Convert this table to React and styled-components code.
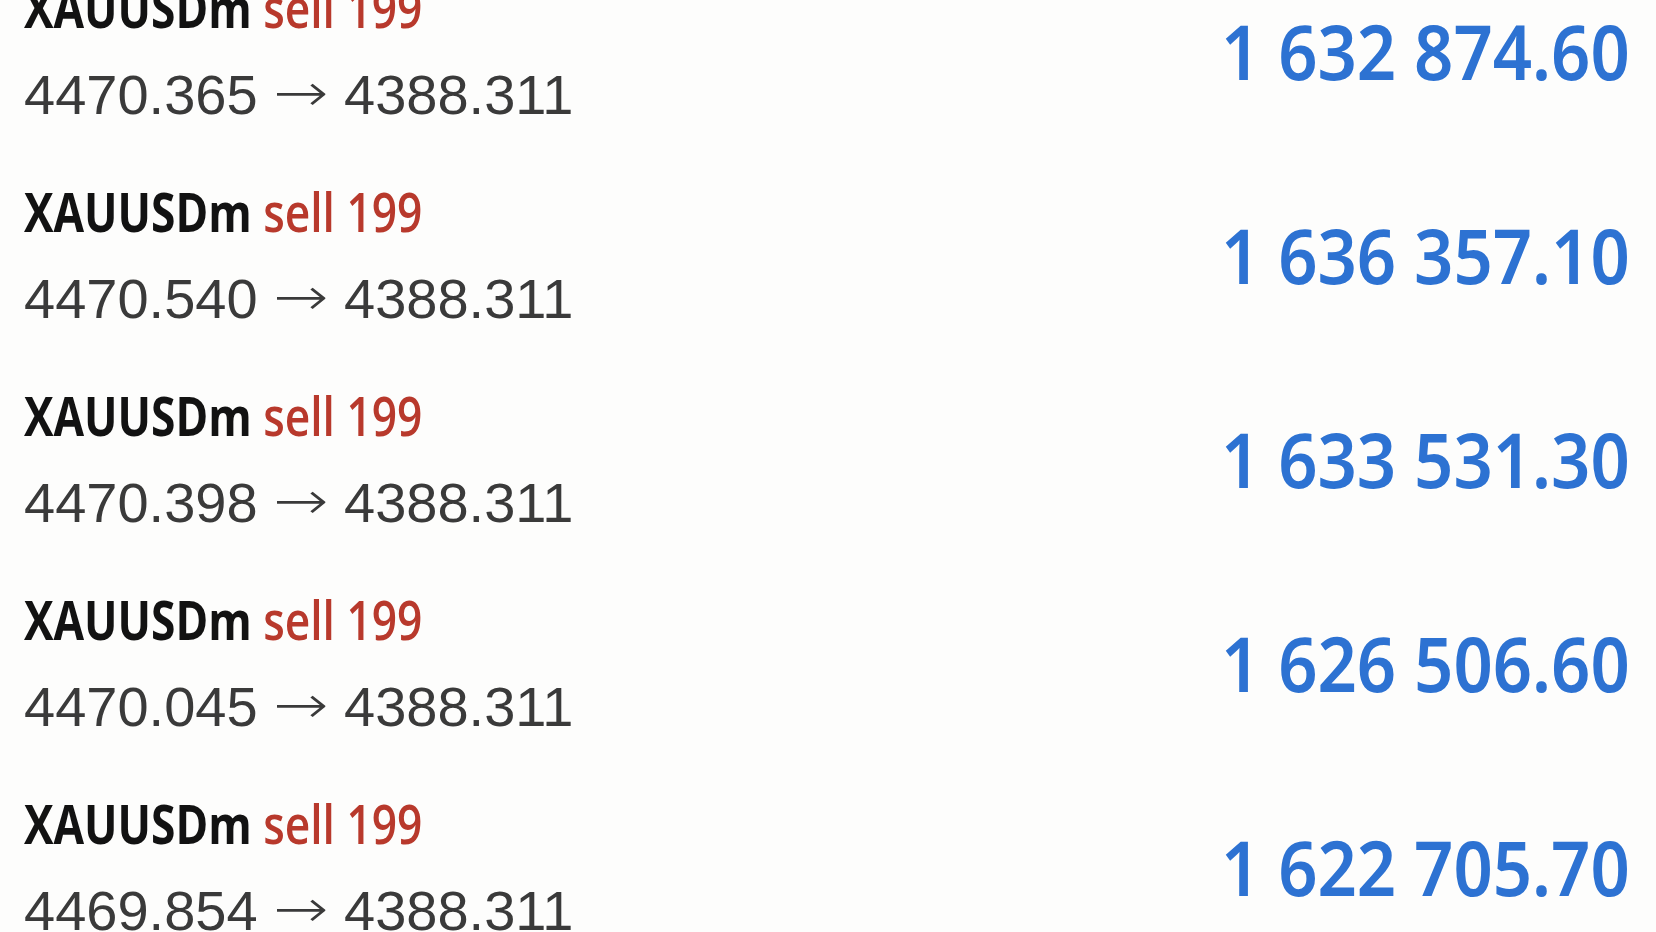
import React from "react";
import styled, { createGlobalStyle } from "styled-components";

const Global = createGlobalStyle`
  html, body { margin: 0; padding: 0; background: #fdfdfc; }
  body { overflow: hidden; height: 932px; }
`;

const List = styled.div`
  display: flex;
  flex-direction: column;
  margin-top: -51px;
  padding: 0 26px 0 24px;
`;

const Row = styled.div`
  display: flex;
  align-items: center;
  justify-content: space-between;
  height: 204px;
`;

const Info = styled.div`
  display: flex;
  flex-direction: column;
  align-items: flex-start;
  gap: 29px;
`;

const Title = styled.div`
  font-family: "Open Sans", "Noto Sans", sans-serif;
  font-weight: 700;
  font-size: 54px;
  line-height: 56px;
  color: #121212;
  white-space: nowrap;
  transform: scaleX(0.82);
  transform-origin: left center;
`;

const Side = styled.span`
  color: #b8392c;
  font-weight: 600;
`;

const Prices = styled.div`
  font-family: "Liberation Sans", Arial, sans-serif;
  font-size: 56px;
  line-height: 56px;
  color: #3a3a3a;
  white-space: nowrap;
`;

const Arrow = styled.span`
  font-family: "DejaVu Sans", sans-serif;
  font-weight: 200;
  font-size: 66px;
  line-height: 56px;
  display: inline-block;
  transform: translateY(1px) scaleY(0.8);
`;

const Amount = styled.div`
  font-family: "Noto Sans", Roboto, sans-serif;
  font-weight: 600;
  font-size: 76px;
  line-height: 80px;
  color: #2d72d2;
  white-space: nowrap;
  transform: scaleX(0.905);
  transform-origin: right center;
`;

const rows = [
  { open: "4470.365", amount: "1 632 874.60" },
  { open: "4470.540", amount: "1 636 357.10" },
  { open: "4470.398", amount: "1 633 531.30" },
  { open: "4470.045", amount: "1 626 506.60" },
  { open: "4469.854", amount: "1 622 705.70" },
];

export default function App() {
  return (
    <>
      <Global />
      <List>
        {rows.map((r, i) => (
          <Row key={i}>
            <Info>
              <Title>
                XAUUSDm <Side>sell 199</Side>
              </Title>
              <Prices>
                {r.open} <Arrow>→</Arrow> 4388.311
              </Prices>
            </Info>
            <Amount>{r.amount}</Amount>
          </Row>
        ))}
      </List>
    </>
  );
}
